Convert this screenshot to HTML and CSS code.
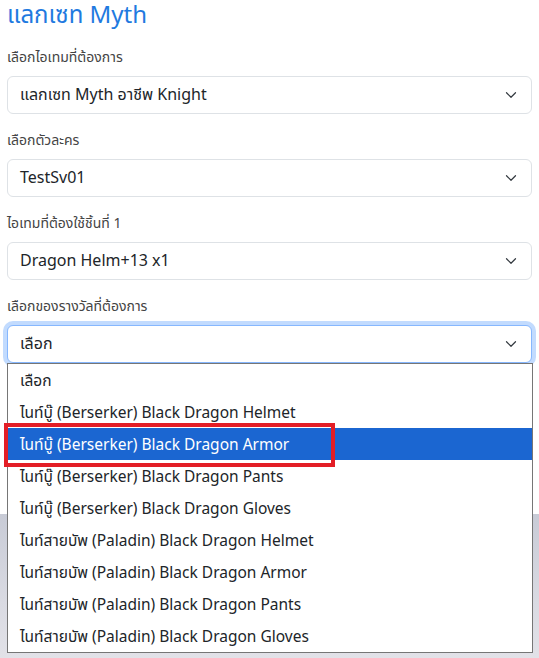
FILE: index.html
```html
<!DOCTYPE html>
<html lang="th">

<head>
    <meta charset="UTF-8">
    <title>แลกเซท Myth</title>
    <link rel="stylesheet" href="styles.css">
</head>

<body>
    <div class="page">
        <h4 class="title">แลกเซท Myth</h4>

        <!-- Exchange form -->
        <div class="field">
            <label class="field-label">เลือกไอเทมที่ต้องการ</label>
            <div class="select">
                <span>แลกเซท Myth อาชีพ Knight</span>
                <svg class="chevron" viewBox="0 0 16 16" width="16" height="16"><path d="m2 5 6 6 6-6" /></svg>
            </div>
        </div>

        <div class="field">
            <label class="field-label">เลือกตัวละคร</label>
            <div class="select">
                <span>TestSv01</span>
                <svg class="chevron" viewBox="0 0 16 16" width="16" height="16"><path d="m2 5 6 6 6-6" /></svg>
            </div>
        </div>

        <div class="field">
            <label class="field-label">ไอเทมที่ต้องใช้ชิ้นที่ 1</label>
            <div class="select">
                <span>Dragon Helm+13 x1</span>
                <svg class="chevron" viewBox="0 0 16 16" width="16" height="16"><path d="m2 5 6 6 6-6" /></svg>
            </div>
        </div>

        <div class="field">
            <label class="field-label">เลือกของรางวัลที่ต้องการ</label>
            <div class="select-wrap">
                <div class="select focused">
                    <span>เลือก</span>
                    <svg class="chevron" viewBox="0 0 16 16" width="16" height="16"><path d="m2 5 6 6 6-6" /></svg>
                </div>

                <!-- Open option list -->
                <ul class="options">
                    <li>เลือก</li>
                    <li>ไนท์บู๊ (Berserker) Black Dragon Helmet</li>
                    <li class="active">ไนท์บู๊ (Berserker) Black Dragon Armor</li>
                    <li>ไนท์บู๊ (Berserker) Black Dragon Pants</li>
                    <li>ไนท์บู๊ (Berserker) Black Dragon Gloves</li>
                    <li>ไนท์สายบัพ (Paladin) Black Dragon Helmet</li>
                    <li>ไนท์สายบัพ (Paladin) Black Dragon Armor</li>
                    <li>ไนท์สายบัพ (Paladin) Black Dragon Pants</li>
                    <li>ไนท์สายบัพ (Paladin) Black Dragon Gloves</li>
                </ul>
                <div class="marker"></div>
            </div>
        </div>
    </div>

    <div class="backdrop"></div>
</body>

</html>
```

FILE: styles.css
```css
body {
    margin: 0;
    padding: 0;
    background-color: #fff;
    font-family: "Segoe UI", "Noto Sans Thai", "Noto Sans", sans-serif;
    color: #212529;
}

.page {
    padding: 0 7px;
    display: flex;
    flex-direction: column;
    gap: 16px;
}

.title {
    margin: 0 0 -2px;
    font-size: 24px;
    font-weight: 400;
    line-height: 33px;
    color: #1f7ae0;
}

.field {
    display: flex;
    flex-direction: column;
    gap: 8px;
}

.field-label {
    font-size: 14px;
    line-height: 21px;
    color: #444;
}

.select {
    height: 38px;
    box-sizing: border-box;
    border: 1px solid #dee2e6;
    border-radius: 6px;
    padding: 0 12px;
    display: flex;
    align-items: center;
    justify-content: space-between;
    font-size: 16px;
    background: #fff;
}

.chevron {
    width: 16px;
    height: 12px;
    fill: none;
    stroke: #343a40;
    stroke-width: 1.6;
    stroke-linecap: round;
    stroke-linejoin: round;
}

.select.focused {
    border-color: #86b7fe;
    box-shadow: 0 0 0 4px rgba(13, 110, 253, 0.25);
}

.select-wrap {
    position: relative;
}

/* Dropdown list shown over the page */
.options {
    position: absolute;
    z-index: 10;
    top: 38px;
    left: 0;
    right: -1px;
    margin: 0;
    padding: 0;
    list-style: none;
    background: #fff;
    border: 1px solid #767676;
}

.options li {
    height: 32px;
    line-height: 35px;
    padding: 0 12px;
    font-size: 15.5px;
    white-space: nowrap;
    overflow: hidden;
}

.options li.active {
    background: #1b66d1;
    color: #fff;
}

.marker {
    position: absolute;
    z-index: 11;
    top: 98px;
    left: -3px;
    width: 323px;
    height: 36px;
    border: 4px solid #e31e26;
}

.backdrop {
    margin-top: 151px;
    height: 145px;
    background: linear-gradient(180deg, #c8cbd6 0%, #d9dae2 60%, #e2e2e8 100%);
}
```
